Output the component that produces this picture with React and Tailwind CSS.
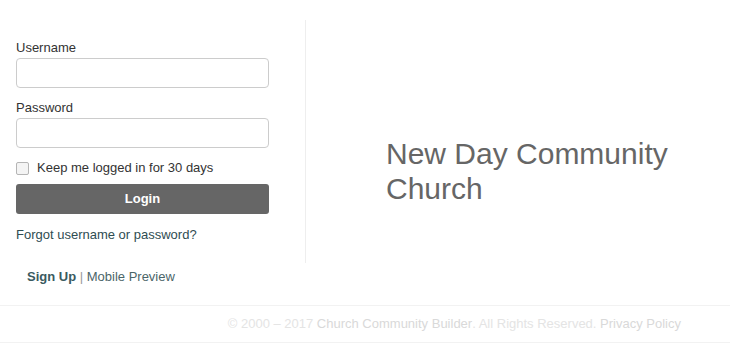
export default function App() {
  return (
    <div className="w-[730px] h-[353px] bg-white font-['Liberation_Sans',Arial,sans-serif] text-[#333] overflow-hidden">
      <div className="flex pt-[20px]">
        {/* Login form */}
        <div className="w-[306px] border-r border-[#eeeeee] pl-4 pr-[37px] pt-[19px] pb-[19px]">
          <label className="block text-[13px] leading-[18px] text-[#333] mb-[1px]">Username</label>
          <input type="text" className="block w-[253px] h-[30px] border border-[#cccccc] rounded-[4px] px-2 text-[13px] outline-none" />
          <label className="block text-[13px] leading-[18px] text-[#333] mt-[11px] mb-[1px]">Password</label>
          <input type="password" className="block w-[253px] h-[30px] border border-[#cccccc] rounded-[4px] px-2 text-[13px] outline-none" />
          <div className="flex items-center mt-[12px] h-[16px]">
            <span className="w-[13px] h-[13px] border border-[#b5b5b5] rounded-[2px] bg-[#f4f4f4]" />
            <span className="ml-[8px] text-[13px] leading-[18px] text-[#333]">Keep me logged in for 30 days</span>
          </div>
          <button className="block mt-[8px] w-[253px] h-[30px] rounded-[3px] bg-[#666666] text-white text-[13px] font-bold">
            Login
          </button>
          <div className="mt-[12px] text-[13px] leading-[18px] text-[#2f4d52]">Forgot username or password?</div>
        </div>
        {/* Church name */}
        <div className="flex-1 pl-[80px] pt-[116px]">
          <h1 className="w-[320px] text-[30px] leading-[35px] text-[#666666] font-normal">New Day Community Church</h1>
        </div>
      </div>
      <div className="mt-[5px] pl-[27px] text-[13px] leading-[18px] text-[#4b6569]">
        <span className="font-bold text-[#3a5a5f]">Sign Up</span>
        <span className="text-[#999]"> | </span>
        <span>Mobile Preview</span>
      </div>
      <div className="mt-[19px] h-[38px] border-t border-b border-[#f2f2f2] flex items-center justify-end pr-[49px] text-[13px] text-[#e4e4e4]">
        <span>© 2000 – 2017 </span>
        <span className="text-[#d9d9d9]">&nbsp;Church Community Builder</span>
        <span>. All Rights Reserved.&nbsp;</span>
        <span className="text-[#d9d9d9]">Privacy Policy</span>
      </div>
    </div>
  );
}
